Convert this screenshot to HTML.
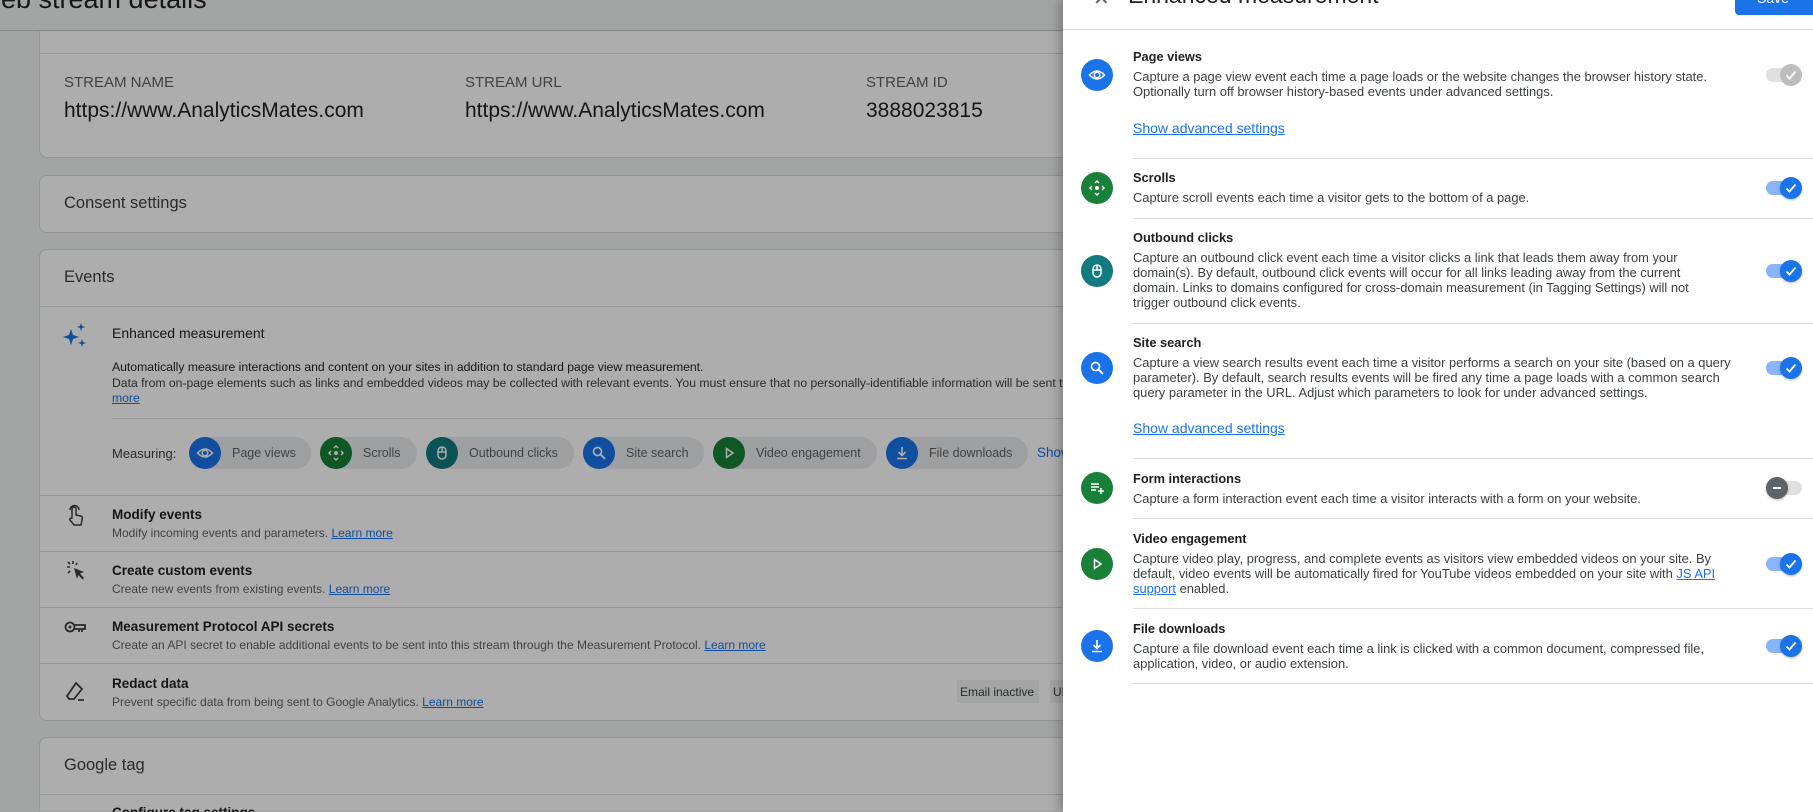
<!DOCTYPE html>
<html><head><meta charset="utf-8">
<style>
*{margin:0;padding:0;box-sizing:border-box}
html,body{width:1813px;height:812px;overflow:hidden}
body{position:relative;font-family:"Liberation Sans",sans-serif;color:#202124;background:#f1f3f4}
.a{position:absolute;white-space:nowrap}
.card{position:absolute;left:39px;width:1100px;background:#fff;border:1px solid #dadce0;border-radius:8px}
.hl{position:absolute;height:1px;background:#dadce0}
.lbl{font-size:15px;color:#5f6368}
.val{font-size:21px;color:#202124}
.t{font-size:13px;font-weight:bold;color:#202124}
.d{font-size:12px;color:#5f6368}
a,.lk{color:#1a73e8;text-decoration:underline}
.chip{position:absolute;top:437px;height:32px;border-radius:16px;background:#e8eaed;font-size:12.5px;color:#5f6368}
.chip .c{position:absolute;left:0;top:0;width:32px;height:32px;border-radius:16px;display:flex;align-items:center;justify-content:center}
.chip span{position:absolute;top:9px}
.scrim{position:absolute;left:0;top:0;width:1063px;height:812px;background:rgba(0,0,0,0.32)}
.panel{position:absolute;left:1063px;top:0;width:750px;height:812px;background:#fff;box-shadow:-4px 0 10px rgba(0,0,0,0.25);overflow:hidden}
.ic{position:absolute;left:18px;width:32px;height:32px;border-radius:16px;display:flex;align-items:center;justify-content:center}
.pt{position:absolute;left:70px;font-size:12.8px;font-weight:bold;color:#202124}
.pd{position:absolute;left:70px;font-size:12.9px;line-height:15px;color:#3c4043;white-space:nowrap}
.pl{position:absolute;left:70px;font-size:14px;color:#1a73e8;text-decoration:underline}
.ph{position:absolute;left:70px;right:0;height:1px;background:#dadce0}
.tg{position:absolute;left:703px;width:36px;height:22px}
.tg .tr{position:absolute;left:0;top:4px;width:32px;height:14px;border-radius:7px;background:#8ab4f8}
.tg .th{position:absolute;left:14px;top:0;width:22px;height:22px;border-radius:11px;background:#1a73e8;display:flex;align-items:center;justify-content:center;box-shadow:0 1px 2px rgba(0,0,0,.3)}
</style></head><body>
<div class="a" style="left:-24px;top:-16px;font-size:27px;color:#202124">Web stream details</div>
<div class="hl" style="left:0;top:30px;width:1063px;background:#c4c6c9"></div>
<div class="card" style="top:31px;height:127px;border-top:none;border-radius:0 0 8px 8px"></div>
<div class="hl" style="left:40px;top:53px;width:1023px"></div>
<div class="a lbl" style="left:64px;top:74px">STREAM NAME</div>
<div class="a lbl" style="left:465px;top:74px">STREAM URL</div>
<div class="a lbl" style="left:866px;top:74px">STREAM ID</div>
<div class="a val" style="left:64px;top:99px">https://www.AnalyticsMates.com</div>
<div class="a val" style="left:465px;top:99px">https://www.AnalyticsMates.com</div>
<div class="a val" style="left:866px;top:99px">3888023815</div>

<div class="card" style="top:175px;height:58px"></div>
<div class="a" style="left:64px;top:194px;font-size:16.5px;color:#3c4043">Consent settings</div>

<div class="card" style="top:249px;height:472px"></div>
<div class="a" style="left:64px;top:268px;font-size:16.5px;color:#3c4043">Events</div>
<div class="hl" style="left:40px;top:306px;width:1023px"></div>
<svg class="a" style="left:63px;top:323px" width="26" height="26" viewBox="0 0 26 26"><path d="M8 6 L10 12 L16 14 L10 16 L8 22 L6 16 L0 14 L6 12Z" fill="#1a73e8"/><path d="M18 0 L19 3 L22 4 L19 5 L18 8 L17 5 L14 4 L17 3Z" fill="#1a73e8"/><path d="M19 16 L20 19 L23 20 L20 21 L19 24 L18 21 L15 20 L18 19Z" fill="#1a73e8"/></svg>
<div class="a" style="left:112px;top:325px;font-size:14px;color:#202124">Enhanced measurement</div>
<div class="a" style="left:112px;top:360px;font-size:12.2px;color:#202124">Automatically measure interactions and content on your sites in addition to standard page view measurement.</div>
<div class="a" style="left:112px;top:376px;font-size:12.2px;color:#3c4043">Data from on-page elements such as links and embedded videos may be collected with relevant events. You must ensure that no personally-identifiable information will be sent to Google. Learn</div>
<div class="a lk" style="left:112px;top:391px;font-size:12.2px">more</div>
<div class="hl" style="left:112px;top:418px;width:951px"></div>
<div class="a" style="left:112px;top:446px;font-size:13px;color:#3c4043">Measuring:</div>
<div class="chip" style="left:189px;width:122px"><div class="c" style="background:#1a73e8"><svg width="18" height="18" viewBox="0 0 18 18"><path d="M1.5 9 Q9 1 16.5 9 Q9 17 1.5 9Z" fill="none" stroke="#fff" stroke-width="1.6"/><circle cx="9" cy="9" r="2.8" fill="none" stroke="#fff" stroke-width="1.6"/></svg></div><span style="left:43px">Page views</span></div>
<div class="chip" style="left:320px;width:97px"><div class="c" style="background:#188038"><svg width="18" height="18" viewBox="0 0 18 18"><circle cx="9" cy="9" r="2" fill="#fff"/><path d="M7 4 L9 2 L11 4 M7 14 L9 16 L11 14 M4 7 L2 9 L4 11 M14 7 L16 9 L14 11" fill="none" stroke="#fff" stroke-width="1.5"/></svg></div><span style="left:43px">Scrolls</span></div>
<div class="chip" style="left:426px;width:148px"><div class="c" style="background:#127a80"><svg width="18" height="18" viewBox="0 0 18 18"><rect x="5" y="3" width="8" height="12" rx="4" fill="none" stroke="#fff" stroke-width="1.5"/><path d="M5 8 H13 M9 3 V8" stroke="#fff" stroke-width="1.5"/></svg></div><span style="left:43px">Outbound clicks</span></div>
<div class="chip" style="left:583px;width:121px"><div class="c" style="background:#1a73e8"><svg width="18" height="18" viewBox="0 0 18 18"><circle cx="7.5" cy="7.5" r="4" fill="none" stroke="#fff" stroke-width="1.7"/><path d="M10.5 10.5 L15 15" stroke="#fff" stroke-width="1.9"/></svg></div><span style="left:43px">Site search</span></div>
<div class="chip" style="left:713px;width:164px"><div class="c" style="background:#188038"><svg width="18" height="18" viewBox="0 0 18 18"><path d="M6.5 4.5 L13 9 L6.5 13.5Z" fill="none" stroke="#fff" stroke-width="1.5"/></svg></div><span style="left:43px">Video engagement</span></div>
<div class="chip" style="left:886px;width:142px"><div class="c" style="background:#1a73e8"><svg width="18" height="18" viewBox="0 0 18 18"><path d="M9 3 V11 M5.5 8 L9 11.5 L12.5 8 M4 14.5 H14" fill="none" stroke="#fff" stroke-width="1.6"/></svg></div><span style="left:43px">File downloads</span></div>
<div class="a" style="left:1037px;top:445px;font-size:13.5px;color:#1a73e8">Show</div>
<div class="hl" style="left:40px;top:495px;width:1023px"></div>

<svg class="a" style="left:66px;top:504px" width="20" height="24" viewBox="0 0 20 24"><path d="M6 14 V5 a2 2 0 0 1 4 0 V11 L15 12 Q17 13 16 16 L15 21 H8 L4 16 Q3 14 6 14Z M4 6 a4.5 4.5 0 0 1 9 0" fill="none" stroke="#3c4043" stroke-width="1.5"/></svg>
<div class="a t" style="left:112px;top:507px;font-size:13.5px">Modify events</div>
<div class="a d" style="left:112px;top:526px">Modify incoming events and parameters. <a>Learn more</a></div>
<div class="hl" style="left:40px;top:551px;width:1023px"></div>
<svg class="a" style="left:65px;top:560px" width="22" height="22" viewBox="0 0 22 22"><path d="M9 8 L19 12 L15 13.5 L19 18 L17.5 19.5 L13.5 15 L12 19Z" fill="#3c4043"/><path d="M8 1 V4 M2 7 H5 M3 2 L5 4 M12 3 L11 5 M3 13 L5 11" stroke="#3c4043" stroke-width="1.6"/></svg>
<div class="a t" style="left:112px;top:563px;font-size:13.5px">Create custom events</div>
<div class="a d" style="left:112px;top:582px">Create new events from existing events. <a>Learn more</a></div>
<div class="hl" style="left:40px;top:607px;width:1023px"></div>
<svg class="a" style="left:64px;top:619px" width="24" height="16" viewBox="0 0 24 16"><circle cx="6" cy="8" r="4.5" fill="none" stroke="#3c4043" stroke-width="1.8"/><circle cx="6" cy="8" r="1.5" fill="#3c4043"/><path d="M10.5 6 H21 V10 H18 V13 M15 10 V13 M10.5 10 H21" fill="none" stroke="#3c4043" stroke-width="1.8"/></svg>
<div class="a t" style="left:112px;top:619px;font-size:13.5px">Measurement Protocol API secrets</div>
<div class="a d" style="left:112px;top:638px">Create an API secret to enable additional events to be sent into this stream through the Measurement Protocol. <a>Learn more</a></div>
<div class="hl" style="left:40px;top:663px;width:1023px"></div>
<svg class="a" style="left:64px;top:680px" width="24" height="24" viewBox="0 0 24 24"><path d="M12 3 L18 9 L10 19 H5 L3 16Z M14 20 H20" fill="none" stroke="#3c4043" stroke-width="1.8"/></svg>
<div class="a t" style="left:112px;top:676px;font-size:13.5px">Redact data</div>
<div class="a d" style="left:112px;top:695px">Prevent specific data from being sent to Google Analytics. <a>Learn more</a></div>
<div class="a" style="left:957px;top:680px;width:82px;height:23px;background:#f1f3f4;font-size:12px;color:#3c4043;padding:5px 3px">Email inactive</div>
<div class="a" style="left:1050px;top:680px;width:40px;height:23px;background:#f1f3f4;font-size:12px;color:#3c4043;padding:5px 3px">URL</div>

<div class="card" style="top:737px;height:74px;border-bottom:none;border-radius:8px 8px 0 0"></div>
<div class="a" style="left:64px;top:756px;font-size:16.5px;color:#3c4043">Google tag</div>
<div class="hl" style="left:40px;top:794px;width:1023px"></div>
<div class="a t" style="left:112px;top:805px;font-size:13.5px">Configure tag settings</div>

<div class="scrim"></div>

<div class="panel">
 <div class="a" style="left:30px;top:-14px;font-size:20px;color:#5f6368">✕</div>
 <div class="a" style="left:65px;top:-18px;font-size:23px;color:#202124">Enhanced measurement</div>
 <div class="a" style="left:672px;top:-10px;width:90px;height:25px;background:#1a73e8;border-radius:4px;color:#fff;font-size:14px;padding:0 0 0 22px">Save</div>
 <div style="position:absolute;left:0;right:0;top:29px;height:1px;background:#dadce0"></div>

 <div class="ic" style="top:59px;background:#1a73e8"><svg width="18" height="18" viewBox="0 0 18 18"><path d="M1.5 9 Q9 1 16.5 9 Q9 17 1.5 9Z" fill="none" stroke="#fff" stroke-width="1.6"/><circle cx="9" cy="9" r="2.8" fill="none" stroke="#fff" stroke-width="1.6"/></svg></div>
 <div class="pt" style="top:49px">Page views</div>
 <div class="pd" style="top:69px">Capture a page view event each time a page loads or the website changes the browser history state.<br>Optionally turn off browser history-based events under advanced settings.</div>
 <div class="pl" style="top:120px">Show advanced settings</div>
 <div class="tg" style="top:64px"><div class="tr" style="background:#e0e0e0"></div><div class="th" style="background:#bdbdbd;box-shadow:none"><svg width="14" height="14" viewBox="0 0 14 14"><path d="M2.5 7.5 L5.5 10.5 L11.5 3.5" fill="none" stroke="#fff" stroke-width="1.8"/></svg></div></div>
 <div class="ph" style="top:158px"></div>

 <div class="ic" style="top:172px;background:#188038"><svg width="18" height="18" viewBox="0 0 18 18"><circle cx="9" cy="9" r="2" fill="#fff"/><path d="M7 4 L9 2 L11 4 M7 14 L9 16 L11 14 M4 7 L2 9 L4 11 M14 7 L16 9 L14 11" fill="none" stroke="#fff" stroke-width="1.5"/></svg></div>
 <div class="pt" style="top:170px">Scrolls</div>
 <div class="pd" style="top:190px">Capture scroll events each time a visitor gets to the bottom of a page.</div>
 <div class="tg" style="top:177px"><div class="tr"></div><div class="th"><svg width="14" height="14" viewBox="0 0 14 14"><path d="M2.5 7.5 L5.5 10.5 L11.5 3.5" fill="none" stroke="#fff" stroke-width="1.8"/></svg></div></div>
 <div class="ph" style="top:218px"></div>

 <div class="ic" style="top:255px;background:#127a80"><svg width="18" height="18" viewBox="0 0 18 18"><rect x="5" y="3" width="8" height="12" rx="4" fill="none" stroke="#fff" stroke-width="1.5"/><path d="M5 8 H13 M9 3 V8" stroke="#fff" stroke-width="1.5"/></svg></div>
 <div class="pt" style="top:230px">Outbound clicks</div>
 <div class="pd" style="top:250px">Capture an outbound click event each time a visitor clicks a link that leads them away from your<br>domain(s). By default, outbound click events will occur for all links leading away from the current<br>domain. Links to domains configured for cross-domain measurement (in Tagging Settings) will not<br>trigger outbound click events.</div>
 <div class="tg" style="top:260px"><div class="tr"></div><div class="th"><svg width="14" height="14" viewBox="0 0 14 14"><path d="M2.5 7.5 L5.5 10.5 L11.5 3.5" fill="none" stroke="#fff" stroke-width="1.8"/></svg></div></div>
 <div class="ph" style="top:323px"></div>

 <div class="ic" style="top:352px;background:#1a73e8"><svg width="18" height="18" viewBox="0 0 18 18"><circle cx="7.5" cy="7.5" r="4" fill="none" stroke="#fff" stroke-width="1.7"/><path d="M10.5 10.5 L15 15" stroke="#fff" stroke-width="1.9"/></svg></div>
 <div class="pt" style="top:335px">Site search</div>
 <div class="pd" style="top:355px">Capture a view search results event each time a visitor performs a search on your site (based on a query<br>parameter). By default, search results events will be fired any time a page loads with a common search<br>query parameter in the URL. Adjust which parameters to look for under advanced settings.</div>
 <div class="pl" style="top:420px">Show advanced settings</div>
 <div class="tg" style="top:357px"><div class="tr"></div><div class="th"><svg width="14" height="14" viewBox="0 0 14 14"><path d="M2.5 7.5 L5.5 10.5 L11.5 3.5" fill="none" stroke="#fff" stroke-width="1.8"/></svg></div></div>
 <div class="ph" style="top:458px"></div>

 <div class="ic" style="top:472px;background:#188038"><svg width="18" height="18" viewBox="0 0 18 18"><path d="M3 5 H11 M3 8 H11 M3 11 H8 M13 9 V15 M10 12 H16" stroke="#fff" stroke-width="1.5"/></svg></div>
 <div class="pt" style="top:471px">Form interactions</div>
 <div class="pd" style="top:491px">Capture a form interaction event each time a visitor interacts with a form on your website.</div>
 <div class="tg" style="top:477px"><div class="tr" style="left:4px;background:#e0e0e0"></div><div class="th" style="left:0;background:#5f6368"><svg width="14" height="14" viewBox="0 0 14 14"><path d="M3 7 H11" stroke="#fff" stroke-width="2"/></svg></div></div>
 <div class="ph" style="top:518px"></div>

 <div class="ic" style="top:548px;background:#188038"><svg width="18" height="18" viewBox="0 0 18 18"><path d="M6.5 4.5 L13 9 L6.5 13.5Z" fill="none" stroke="#fff" stroke-width="1.5"/></svg></div>
 <div class="pt" style="top:531px">Video engagement</div>
 <div class="pd" style="top:551px">Capture video play, progress, and complete events as visitors view embedded videos on your site. By<br>default, video events will be automatically fired for YouTube videos embedded on your site with <span class="lk">JS API</span><br><span class="lk">support</span> enabled.</div>
 <div class="tg" style="top:553px"><div class="tr"></div><div class="th"><svg width="14" height="14" viewBox="0 0 14 14"><path d="M2.5 7.5 L5.5 10.5 L11.5 3.5" fill="none" stroke="#fff" stroke-width="1.8"/></svg></div></div>
 <div class="ph" style="top:608px"></div>

 <div class="ic" style="top:630px;background:#1a73e8"><svg width="18" height="18" viewBox="0 0 18 18"><path d="M9 3 V11 M5.5 8 L9 11.5 L12.5 8 M4 14.5 H14" fill="none" stroke="#fff" stroke-width="1.6"/></svg></div>
 <div class="pt" style="top:621px">File downloads</div>
 <div class="pd" style="top:641px">Capture a file download event each time a link is clicked with a common document, compressed file,<br>application, video, or audio extension.</div>
 <div class="tg" style="top:635px"><div class="tr"></div><div class="th"><svg width="14" height="14" viewBox="0 0 14 14"><path d="M2.5 7.5 L5.5 10.5 L11.5 3.5" fill="none" stroke="#fff" stroke-width="1.8"/></svg></div></div>
 <div class="ph" style="top:683px"></div>
</div>
</body></html>
